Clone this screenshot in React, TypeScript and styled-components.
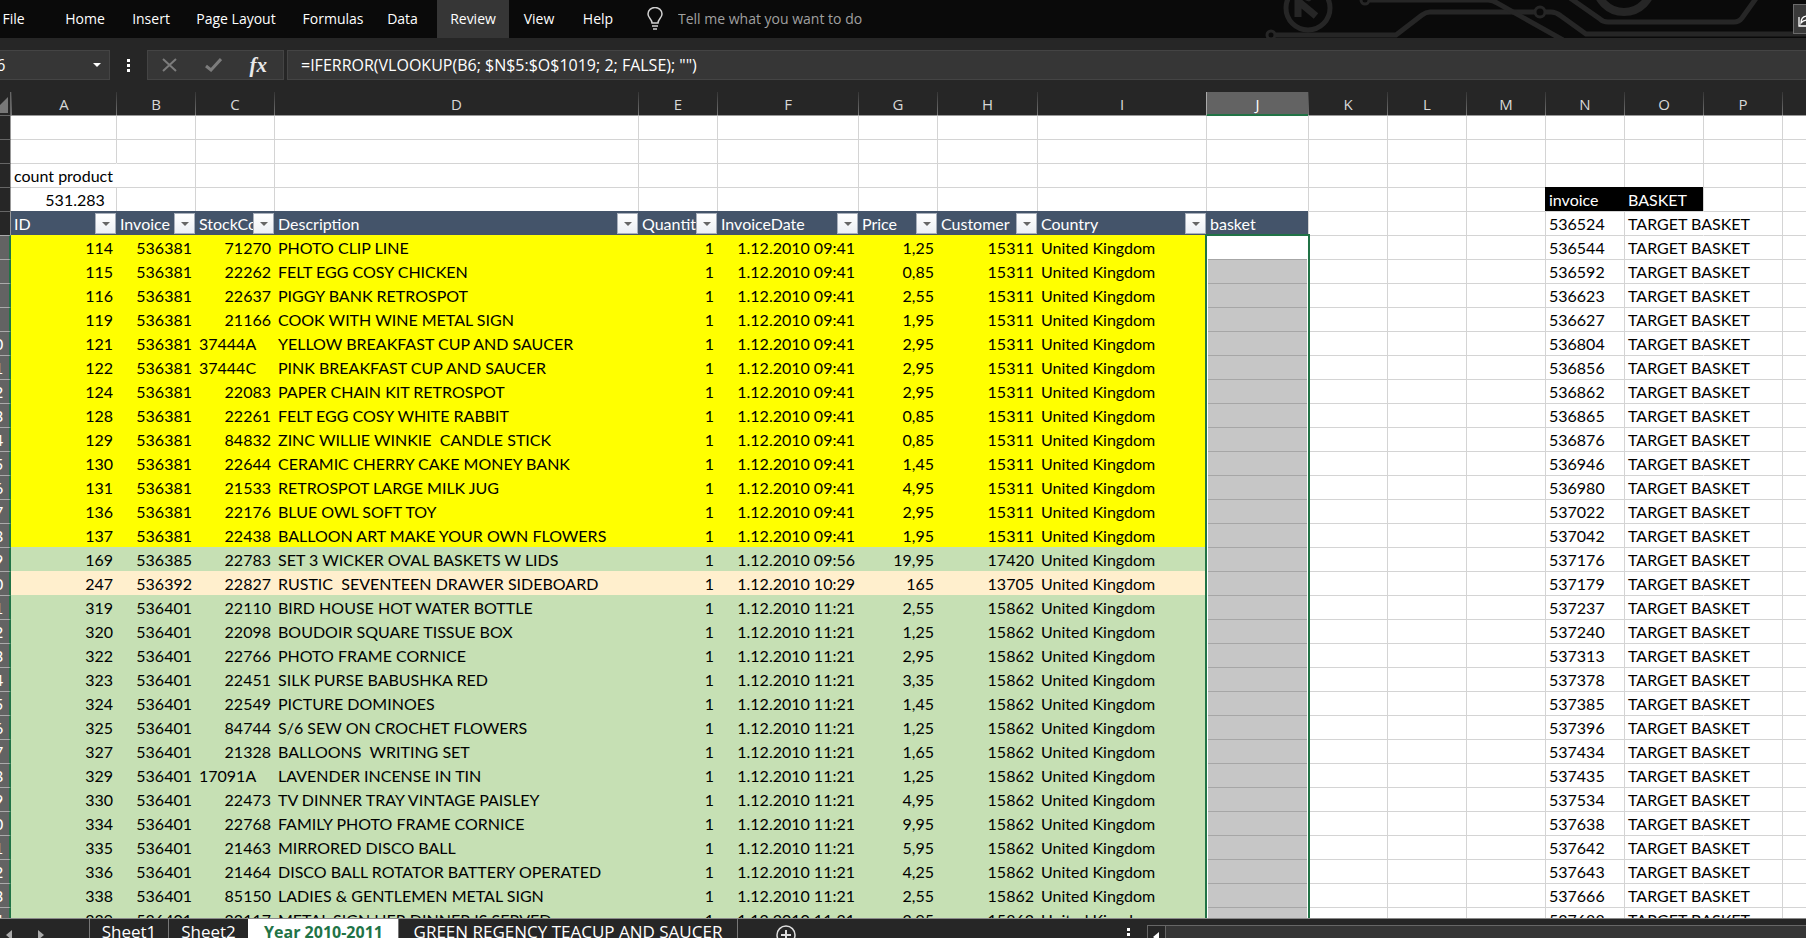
import React from "react";
import styled, { createGlobalStyle, css } from "styled-components";

const GlobalStyle = createGlobalStyle`
  * { box-sizing: border-box; }
  body { margin: 0; background: #262626; overflow: hidden; }
  button, input { font: inherit; color: inherit; border: 0; padding: 0; margin: 0; background: none; }
`;

const GRID = "#d4d4d4";
const GREEN = "#217346";

const Window = styled.div`
  display: flex;
  flex-direction: column;
  height: 100vh;
  overflow: hidden;
  background: #262626;
  color: #fff;
  font: 16px/20px "Open Sans", "Noto Sans", sans-serif;
`;

const Ribbon = styled.header`
  position: relative;
  display: flex;
  flex: none;
  height: 38px;
  background: #0a0a0a;
`;
const Circuit = styled.svg`
  position: absolute;
  top: 0;
  right: 0;
  width: 546px;
  height: 38px;
  fill: none;
  stroke: #262626;
  stroke-width: 5;
`;
const RibbonTabs = styled.nav`
  display: flex;
`;
const RibbonTab = styled.button<{ $active?: boolean; $width: number }>`
  width: ${(p) => p.$width}px;
  font-size: 14px;
  white-space: nowrap;
  background: ${(p) => (p.$active ? "#363636" : "transparent")};
  &:first-child { margin-right: 15px; }
`;
const TellMe = styled.label`
  display: flex;
  align-items: center;
  gap: 15px;
  margin-left: 20px;
  font-size: 14px;
  input { width: 220px; outline: 0; }
  input::placeholder { color: #a0a0a0; opacity: 1; }
`;
const ShareButton = styled.button`
  position: relative;
  align-self: flex-start;
  flex: none;
  width: 13px;
  height: 30px;
  margin: 4px 0 0 auto;
  overflow: hidden;
  background: #3a3a3a;
  border: 1px solid #6a6a6a;
  border-right: 0;
  svg { display: block; margin-left: 4px; }
`;

const FormulaBar = styled.section`
  display: flex;
  flex: none;
  height: 54px;
  padding: 12px 0;
`;
const Field = styled.div`
  display: flex;
  align-items: center;
  height: 30px;
  background: #363636;
  border: 1px solid #444;
`;
const NameBox = styled(Field)`
  width: 110px;
  border-left: 0;
  justify-content: space-between;
  padding-right: 8px;
  input { width: 60px; margin-left: -8px; outline: 0; }
`;
const Dots = styled.div`
  display: grid;
  align-content: center;
  justify-items: center;
  gap: 2px;
  width: 37px;
  i { width: 3px; height: 3px; background: #fff; }
`;
const Actions = styled(Field)`
  width: 137px;
  justify-content: space-between;
  padding: 0 16px 0 14px;
  button { display: flex; }
`;
const FunctionLabel = styled.span`
  color: #e8e8e8;
  font: italic 700 21px/24px "Liberation Serif", serif;
`;
const Formula = styled(Field)`
  flex: 1;
  margin-left: 3px;
  border-right: 0;
  padding-left: 13px;
  input { width: 100%; outline: 0; }
`;

const GridArea = styled.main`
  flex: 1;
  min-height: 0;
  overflow: hidden;
  background: linear-gradient(#262626, #262626) 0 0 / 11px 100% no-repeat #fff;
`;
const Sheet = styled.table`
  width: 100%;
  table-layout: fixed;
  border-collapse: separate;
  border-spacing: 0;
  color: #000;
  font: 16px/22px Lato, "Open Sans", sans-serif;
  th, td { padding: 0; font-weight: 400; white-space: pre; }
`;
const Col = styled.col<{ $width?: number }>`
  width: ${(p) => (p.$width ? p.$width + "px" : "auto")};
`;
const ColumnHead = styled.th<{ $selected?: boolean }>`
  height: 23px;
  overflow: hidden;
  text-align: center;
  font-family: "Open Sans", sans-serif;
  font-size: 15px;
  line-height: 21px;
  color: ${(p) => (p.$selected ? "#fff" : "#d8d8d8")};
  background: ${(p) => (p.$selected ? "#636363" : "#262626")};
  border-left: 1px solid;
  border-image: linear-gradient(${(p) => (p.$selected ? "#aaa" : "#333")}, ${(p) => (p.$selected ? "#aaa" : "#777")}) 1;
  ${(p) => p.$selected && css`box-shadow: inset 0 -1px 0 ${GREEN};`}
  && { padding-top: 2px; }
`;
const Corner = styled.th`
  background: #262626;
  border-right: 1px solid #666;
  svg { display: block; margin-top: 4px; }
`;
const RowHead = styled.th<{ $selected: boolean }>`
  height: 24px;
  overflow: hidden;
  background: ${(p) => (p.$selected ? "#636363" : "#262626")};
  color: ${(p) => (p.$selected ? "#fff" : "#d8d8d8")};
  border-top: 1px solid ${(p) => (p.$selected ? "#aaa" : "#666")};
  border-right: ${(p) => (p.$selected ? `2px solid ${GREEN}` : "1px solid #999")};
`;
const RowNumber = styled.div`
  width: 34px;
  margin-left: -23px;
  text-align: center;
`;
type CellLook = {
  $fill?: string;
  $right?: boolean;
  $open?: boolean;
  $ink?: string;
  $first?: boolean;
  $line?: string;
};
const Cell = styled.td<CellLook>`
  position: relative;
  height: 24px;
  text-align: ${(p) => (p.$right ? "right" : "left")};
  color: ${(p) => p.$ink ?? "#000"};
  border-top: 1px solid ${(p) => p.$line ?? p.$fill ?? GRID};
  ${(p) => !p.$first && css`border-left: 1px solid ${p.$fill ?? (p.$open ? "transparent" : GRID)};`}
  ${(p) => p.$fill && css`background: ${p.$fill};`}
  && { padding: 0 ${(p) => (p.$right ? 3 : 0)}px 0 3px; }
`;
const HeadCell = styled.th<{ $first?: boolean }>`
  height: 24px;
  color: #fff;
  background: #44546a;
  ${(p) => !p.$first && css`border-left: 1px solid #44546a;`}
`;
const HeadBody = styled.div`
  display: flex;
  align-items: center;
  height: 24px;
  padding: 1px 0 0 3px;
  span { flex: 1; overflow: hidden; text-align: left; white-space: nowrap; }
`;
const FilterButton = styled.button`
  display: grid;
  place-items: center;
  flex: none;
  width: 21px;
  height: 21px;
  background: linear-gradient(#fff, #eceff4);
  border: 1px solid #a9b0bc;
`;
const Selection = styled.div`
  position: absolute;
  z-index: 1;
  top: -2px;
  left: -2px;
  right: -2px;
  height: 720px;
  border: 2px solid ${GREEN};
  box-shadow: inset 0 0 0 1px #fff;
  pointer-events: none;
`;

const Footer = styled.footer`
  display: flex;
  flex: none;
  height: 20px;
  overflow: hidden;
  border-top: 1px solid #8a8a8a;
  background: #262626;
`;
const Arrows = styled.div`
  display: flex;
  gap: 26px;
  width: 89px;
  padding: 10px 0 0 6px;
  svg { display: block; }
  button { display: block; height: 12px; }
`;
const SheetTab = styled.button<{ $active?: boolean; $width: number }>`
  flex: none;
  width: ${(p) => p.$width}px;
  height: 26px;
  line-height: 24px;
  font-size: 17px;
  white-space: nowrap;
  border-left: 1px solid #777;
  ${(p) => p.$active && css`
    background: #fff;
    color: ${GREEN};
    font-size: 16px;
    font-weight: 700;
    border-color: #fff;
  `}
`;
const AddSheet = styled.button`
  display: block;
  width: 96px;
  border-left: 1px solid #777;
  height: 26px;
  svg { display: block; margin: 5px 0 0 38px; }
`;
const ScrollArea = styled.div`
  display: flex;
  flex: none;
  width: 37.6%;
  margin-left: auto;
  padding-top: 6px;
`;
const Grip = styled.div`
  display: grid;
  gap: 2px;
  align-content: start;
  width: 20px;
  padding-top: 3px;
  i { width: 3px; height: 3px; background: #fff; }
`;
const ScrollLeft = styled.button`
  width: 19px;
  height: 20px;
  background: #262626;
  border: 1px solid #666;
  svg { display: block; margin: 4px 0 0 5px; }
`;
const ScrollTrack = styled.div`
  flex: 1;
  height: 20px;
  background: #363636;
  border: 1px solid #666;
  border-width: 1px 0 0;
`;

const columns: [string, number?][] = [
  ["A", 105], ["B", 79], ["C", 79], ["D", 364], ["E", 79], ["F", 141], ["G", 79], ["H", 100], ["I", 169],
  ["J", 102], ["K", 79], ["L", 79], ["M", 79], ["N", 79], ["O", 79], ["P", 79], ["", undefined],
];
const heads = ["ID", "Invoice", "StockCode", "Description", "Quantity", "InvoiceDate", "Price", "Customer", "Country"];

const YELLOW = "#ffff00";
const LEAF = "#c6e0b4";
const CREAM = "#ffefcd";

const D1 = ["536381", "1.12.2010 09:41", "15311", YELLOW];
const D2 = ["536385", "1.12.2010 09:56", "17420", LEAF];
const D3 = ["536392", "1.12.2010 10:29", "13705", CREAM];
const D4 = ["536401", "1.12.2010 11:21", "15862", LEAF];

const orders: [string, string[], string, string, string][] = [
  ["114", D1, "71270", "PHOTO CLIP LINE", "1,25"],
  ["115", D1, "22262", "FELT EGG COSY CHICKEN", "0,85"],
  ["116", D1, "22637", "PIGGY BANK RETROSPOT", "2,55"],
  ["119", D1, "21166", "COOK WITH WINE METAL SIGN", "1,95"],
  ["121", D1, "37444A", "YELLOW BREAKFAST CUP AND SAUCER", "2,95"],
  ["122", D1, "37444C", "PINK BREAKFAST CUP AND SAUCER", "2,95"],
  ["124", D1, "22083", "PAPER CHAIN KIT RETROSPOT", "2,95"],
  ["128", D1, "22261", "FELT EGG COSY WHITE RABBIT", "0,85"],
  ["129", D1, "84832", "ZINC WILLIE WINKIE  CANDLE STICK", "0,85"],
  ["130", D1, "22644", "CERAMIC CHERRY CAKE MONEY BANK", "1,45"],
  ["131", D1, "21533", "RETROSPOT LARGE MILK JUG", "4,95"],
  ["136", D1, "22176", "BLUE OWL SOFT TOY", "2,95"],
  ["137", D1, "22438", "BALLOON ART MAKE YOUR OWN FLOWERS", "1,95"],
  ["169", D2, "22783", "SET 3 WICKER OVAL BASKETS W LIDS", "19,95"],
  ["247", D3, "22827", "RUSTIC  SEVENTEEN DRAWER SIDEBOARD", "165"],
  ["319", D4, "22110", "BIRD HOUSE HOT WATER BOTTLE", "2,55"],
  ["320", D4, "22098", "BOUDOIR SQUARE TISSUE BOX", "1,25"],
  ["322", D4, "22766", "PHOTO FRAME CORNICE", "2,95"],
  ["323", D4, "22451", "SILK PURSE BABUSHKA RED", "3,35"],
  ["324", D4, "22549", "PICTURE DOMINOES", "1,45"],
  ["325", D4, "84744", "S/6 SEW ON CROCHET FLOWERS", "1,25"],
  ["327", D4, "21328", "BALLOONS  WRITING SET", "1,65"],
  ["329", D4, "17091A", "LAVENDER INCENSE IN TIN", "1,25"],
  ["330", D4, "22473", "TV DINNER TRAY VINTAGE PAISLEY", "4,95"],
  ["334", D4, "22768", "FAMILY PHOTO FRAME CORNICE", "9,95"],
  ["335", D4, "21463", "MIRRORED DISCO BALL", "5,95"],
  ["336", D4, "21464", "DISCO BALL ROTATOR BATTERY OPERATED", "4,25"],
  ["338", D4, "85150", "LADIES & GENTLEMEN METAL SIGN", "2,55"],
  ["339", D4, "22117", "METAL SIGN HER DINNER IS SERVED", "2,95"],
];
const targets = [
  "536524", "536544", "536592", "536623", "536627", "536804", "536856", "536862", "536865", "536876",
  "536946", "536980", "537022", "537042", "537176", "537179", "537237", "537240", "537313", "537378",
  "537385", "537396", "537434", "537435", "537534", "537638", "537642", "537643", "537666", "537688",
];

const Blank = ({ count, line }: { count: number; line?: string }) => (
  <>{Array.from({ length: count }, (_, i) => <Cell key={i} $line={line} />)}</>
);

const Target = ({ index }: { index: number }) => (
  <>
    <Cell>{targets[index]}</Cell>
    <Cell>TARGET BASKET</Cell>
    <Cell $open />
    <Cell />
  </>
);

const Row = ({ n, children }: { n: number; children: React.ReactNode }) => (
  <tr>
    <RowHead scope="row" $selected={n > 5}><RowNumber>{n}</RowNumber></RowHead>
    {children}
  </tr>
);

const OrderRow = ({ index }: { index: number }) => {
  const [id, [invoice, date, customer, fill], stock, description, price] = orders[index];
  return (
    <Row n={index + 6}>
      <Cell $first $fill={fill} $right>{id}</Cell>
      <Cell $fill={fill} $right>{invoice}</Cell>
      <Cell $fill={fill} $right={!/[A-Z]$/.test(stock)}>{stock}</Cell>
      <Cell $fill={fill}>{description}</Cell>
      <Cell $fill={fill} $right>1</Cell>
      <Cell $fill={fill} $right>{date}</Cell>
      <Cell $fill={fill} $right>{price}</Cell>
      <Cell $fill={fill} $right>{customer}</Cell>
      <Cell $fill={fill}>United Kingdom</Cell>
      {index === 0 ? <Cell><Selection /></Cell> : <Cell $fill="#c6c6c6" $line="#a6a6a6" />}
      <Blank count={3} />
      <Target index={index + 1} />
    </Row>
  );
};

const Caret = ({ color }: { color: string }) => (
  <svg width="8" height="4" viewBox="0 0 8 4" aria-hidden="true"><path d="M0 0h8L4 4z" fill={color} /></svg>
);
const Side = ({ color, flip }: { color: string; flip?: boolean }) => (
  <svg width="6" height="10" viewBox="0 0 6 10" aria-hidden="true">
    <path d={flip ? "M0 0v10l6-5z" : "M6 0v10L0 5z"} fill={color} />
  </svg>
);

const tabs: [string, number][] = [
  ["File", 27], ["Home", 86], ["Insert", 46], ["Page Layout", 124], ["Formulas", 70], ["Data", 69], ["Review", 72], ["View", 60], ["Help", 58],
];

export default function App() {
  return (
    <Window>
      <GlobalStyle />
      <Ribbon>
        <Circuit viewBox="0 0 546 38" aria-hidden="true">
          <circle cx="48" cy="8" r="22" />
          <path d="M38 17V-4M38 1l18 15" strokeWidth="7" />
          <path d="M35-4h22l-8 5z" strokeWidth="1" fill="#262626" />
          <circle cx="11" cy="35" r="4" strokeWidth="3" />
          <path d="M16 35h120l26-20q4-3 8-3h105" />
          <circle cx="105" cy="0" r="4" strokeWidth="3" />
          <path d="M110 0h118q5 0 9 3l66 37" />
          <circle cx="280" cy="12" r="5" strokeWidth="3" />
          <path d="M286 12h5q5 0 10 4l25 18h230" />
          <path d="M310-2l30 21q3 3 8 3h126q5 0 8-4L497-3" />
          <circle cx="364" cy="-16" r="28" strokeWidth="8" />
        </Circuit>
        <RibbonTabs aria-label="Ribbon">
          {tabs.map(([name, width]) => (
            <RibbonTab key={name} $width={width} $active={name === "Review"}>{name}</RibbonTab>
          ))}
        </RibbonTabs>
        <TellMe>
          <svg width="16" height="24" viewBox="0 0 16 24" fill="none" stroke="#d0d0d0" strokeWidth="1.5" aria-hidden="true">
            <path d="M5 16c0-4-4-5-4-9a7 6.500 0 0 1 14 0c0 4-4 5-4 9zM5 19h6M6 22h4" />
          </svg>
          <input aria-label="Tell me what you want to do" placeholder="Tell me what you want to do" />
        </TellMe>
        <ShareButton aria-label="Share">
          <svg width="18" height="28" viewBox="0 0 18 28" fill="none" stroke="#fff" strokeWidth="1.3" aria-hidden="true">
            <path d="M1 12v9h14M3 18c0-5 3-7 7-7V8l6 5-6 5v-3c-3 0-5 0-7 3z" />
          </svg>
        </ShareButton>
      </Ribbon>

      <FormulaBar>
        <NameBox>
          <input aria-label="Name box" defaultValue="J6" />
          <Caret color="#fff" />
        </NameBox>
        <Dots><i /><i /><i /></Dots>
        <Actions>
          <button aria-label="Cancel">
            <svg width="15" height="14" viewBox="0 0 15 14" stroke="#7c7c7c" strokeWidth="2"><path d="M1 1l13 12M14 1L1 13" /></svg>
          </button>
          <button aria-label="Enter">
            <svg width="17" height="14" viewBox="0 0 17 14" fill="none" stroke="#7c7c7c" strokeWidth="3"><path d="M1 8l5 4L16 1" /></svg>
          </button>
          <button aria-label="Insert function"><FunctionLabel>fx</FunctionLabel></button>
        </Actions>
        <Formula>
          <input aria-label="Formula" defaultValue={'=IFERROR(VLOOKUP(B6; $N$5:$O$1019; 2; FALSE); "")'} />
        </Formula>
      </FormulaBar>

      <GridArea>
        <Sheet>
          <colgroup>
            <Col $width={11} />
            {columns.map(([name, width]) => <Col key={name} $width={width} />)}
          </colgroup>
          <thead>
            <tr>
              <Corner><svg width="8" height="17" viewBox="0 0 8 17" aria-hidden="true"><path d="M8 0v16H-8z" fill="#777" /></svg></Corner>
              {columns.map(([name]) => <ColumnHead key={name} scope="col" $selected={name === "J"}>{name}</ColumnHead>)}
            </tr>
          </thead>
          <tbody>
            <Row n={1}>
              <Cell $first $line="#999" />
              <Blank count={8} line="#999" />
              <Cell $line={GREEN} />
              <Blank count={7} line="#999" />
            </Row>
            <Row n={2}><Cell $first /><Blank count={16} /></Row>
            <Row n={3}><Cell $first>count product</Cell><Cell $open /><Blank count={15} /></Row>
            <Row n={4}>
              <Cell $first $right>531.283  </Cell>
              <Blank count={12} />
              <Cell $fill="#000" $ink="#fff">invoice</Cell>
              <Cell $fill="#000" $ink="#fff">BASKET</Cell>
              <Blank count={2} />
            </Row>
            <Row n={5}>
              {heads.map((name, i) => (
                <HeadCell key={name} $first={i === 0}>
                  <HeadBody>
                    <span>{name}</span>
                    <FilterButton aria-label={`Filter ${name}`}><Caret color="#666" /></FilterButton>
                  </HeadBody>
                </HeadCell>
              ))}
              <HeadCell><HeadBody><span>basket</span></HeadBody></HeadCell>
              <Blank count={3} />
              <Target index={0} />
            </Row>
            {orders.map((order, i) => <OrderRow key={order[0]} index={i} />)}
          </tbody>
        </Sheet>
      </GridArea>

      <Footer>
        <Arrows>
          <button aria-label="Previous sheet"><Side color="#aaa" /></button>
          <button aria-label="Next sheet"><Side color="#aaa" flip /></button>
        </Arrows>
        <SheetTab $width={79}>Sheet1</SheetTab>
        <SheetTab $width={80}>Sheet2</SheetTab>
        <SheetTab $width={150} $active>Year 2010-2011</SheetTab>
        <SheetTab $width={339}>GREEN REGENCY TEACUP AND SAUCER</SheetTab>
        <AddSheet aria-label="New sheet">
          <svg width="20" height="20" viewBox="0 0 20 20" fill="none" stroke="#ddd" strokeWidth="1.500"><circle cx="10" cy="10" r="9" /><path d="M10 5v10M5 10h10" strokeWidth="2" /></svg>
        </AddSheet>
        <ScrollArea>
          <Grip><i /><i /><i /></Grip>
          <ScrollLeft aria-label="Scroll left"><Side color="#fff" /></ScrollLeft>
          <ScrollTrack />
        </ScrollArea>
      </Footer>
    </Window>
  );
}
